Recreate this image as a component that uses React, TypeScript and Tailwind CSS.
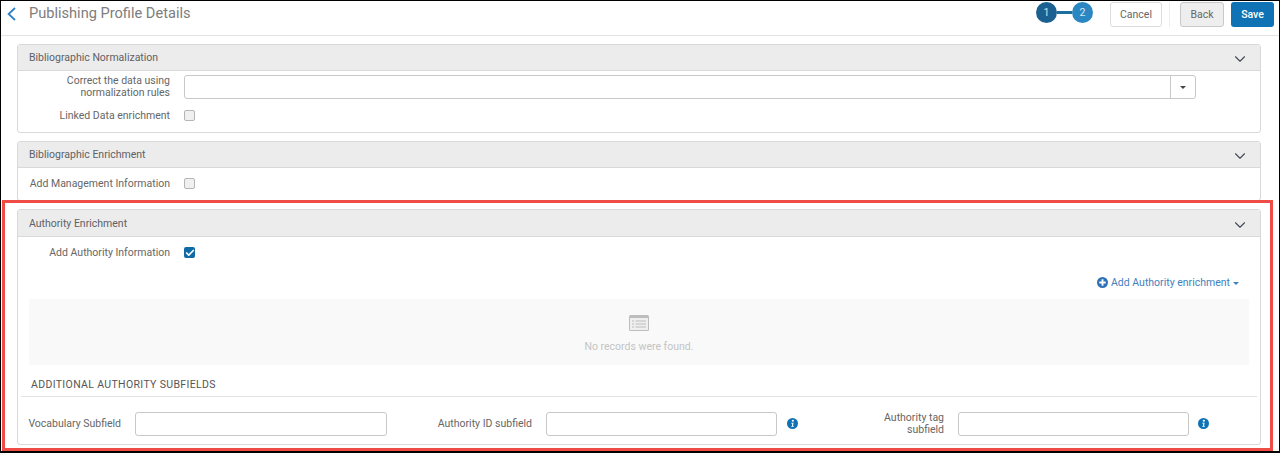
import { ChevronDown, Check } from "lucide-react";
import type { ReactNode } from "react";

function Panel({ title, className, headerClass = "h-[26px]", children }: { title: string; className: string; headerClass?: string; children: ReactNode }) {
  return (
    <section className={`rounded-[3px] border border-[#d9d9d9] bg-white ${className}`}>
      <div className={`flex items-center justify-between border-b border-[#d9d9d9] bg-[#ececec] px-[11px] ${headerClass}`}>
        <h2 className="text-[10.5px] leading-[16px] text-[#5f5f66]">{title}</h2>
        <ChevronDown className="mt-[2px] h-[18px] w-[18px] text-[#444b55]" strokeWidth={1.5} />
      </div>
      {children}
    </section>
  );
}

function FieldLabel({ children, className }: { children: ReactNode; className: string }) {
  return <label className={`text-right text-[10.5px] leading-[12px] text-[#666] ${className}`}>{children}</label>;
}

function Checkbox({ checked = false }: { checked?: boolean }) {
  return checked ? (
    <span className="mb-px ml-[14px] flex h-[11px] w-[11px] items-center justify-center rounded-[2px] bg-[#0f6aa5]">
      <Check className="h-[10px] w-[10px] text-white" strokeWidth={4} />
    </span>
  ) : (
    <span className="mb-px ml-[14px] h-[11px] w-[11px] rounded-[2px] border border-[#b5b5b5] bg-[#f0f0f0]" />
  );
}

function InfoIcon() {
  return (
    <svg viewBox="0 0 12 12" className="h-[11px] w-[11px]">
      <circle cx="6" cy="6" r="6" fill="#0f72b5" />
      <circle cx="6.4" cy="3" r="1.2" fill="#fff" />
      <path d="M4.6 5.1h2.6L6.6 8.6h.8v.9H4.7v-.9h.7l.4-2.6H4.6z" fill="#fff" />
    </svg>
  );
}

function TextInput({ className }: { className: string }) {
  return <input className={`h-[24px] rounded-[3px] border border-[#c8c8c8] bg-white ${className}`} />;
}

export default function App() {
  return (
    <div className="relative h-[453px] w-[1280px] overflow-hidden border border-b-2 border-black bg-white font-['Roboto',sans-serif]">
      <header className="flex h-[35px] items-start border-b border-[#e4e4e4]">
        <svg viewBox="0 0 9 14" className="ml-[6px] mt-[6px] h-[14px] w-[9px] text-[#2f7fc1]" fill="none" stroke="currentColor" strokeWidth="1.8">
          <path d="M8 1 L1.6 7 L8 13" />
        </svg>
        <h1 className="ml-[13px] mt-[1px] text-[14.6px] leading-[22px] text-[#7d7d7d]">Publishing Profile Details</h1>
        <div className="ml-auto mt-px flex items-center">
          <span className="flex h-[21px] w-[21px] items-center justify-center rounded-full bg-[#1a6191] text-[10.5px] text-white/80">1</span>
          <span className="h-[3px] w-[15px] bg-[#1a6f9f]" />
          <span className="flex h-[21px] w-[21px] items-center justify-center rounded-full bg-[#2a87c2] text-[10.5px] text-white/80">2</span>
        </div>
        <button className="ml-[17px] mt-px h-[25px] w-[52px] rounded-[3px] border border-[#dcdcdc] bg-white text-[10.5px] text-[#666]">Cancel</button>
        <span className="ml-[7px] mt-px h-[25px] w-px bg-[#eee]" />
        <button className="ml-[10px] mt-px h-[25px] w-[44px] rounded-[3px] border border-[#c9c9c9] bg-[#eeeeee] text-[10.5px] text-[#666]">Back</button>
        <button className="ml-[7px] mr-[5px] mt-px h-[25px] w-[43px] rounded-[3px] bg-[#0f72b5] text-[10.5px] font-medium text-white">Save</button>
      </header>

      <div className="pl-4 pr-[18px] pt-2">
        <Panel title="Bibliographic Normalization" className="h-[89px]">
          <div className="mt-[4px] flex items-center">
            <FieldLabel className="w-[152px]">Correct the data using<br />normalization rules</FieldLabel>
            <div className="ml-[14px] flex h-[24px] w-[1012px] rounded-[3px] border border-[#c8c8c8]">
              <span className="ml-auto flex w-[25px] items-center justify-center border-l border-[#c8c8c8]">
                <span className="border-x-[3px] border-t-[3px] border-x-transparent border-t-[#444]" />
              </span>
            </div>
          </div>
          <div className="mt-[11px] flex items-center">
            <FieldLabel className="w-[152px]">Linked Data enrichment</FieldLabel>
            <Checkbox />
          </div>
        </Panel>

        <Panel title="Bibliographic Enrichment" className="mt-2 h-[60px]">
          <div className="mt-[10px] flex items-center">
            <FieldLabel className="w-[152px]">Add Management Information</FieldLabel>
            <Checkbox />
          </div>
        </Panel>

        <Panel title="Authority Enrichment" className="mt-2 h-[236px]" headerClass="h-[27px] pt-px">
          <div className="mt-[10px] flex items-center">
            <FieldLabel className="w-[152px]">Add Authority Information</FieldLabel>
            <Checkbox checked />
          </div>
          <div className="mt-[18px] flex items-center justify-end pr-[21px] text-[10.5px] leading-[12px] text-[#3f7fbd]">
            <svg viewBox="0 0 12 12" className="mb-px mr-[3px] h-[11px] w-[11px]">
              <circle cx="6" cy="6" r="6" fill="#2f71b5" />
              <path d="M5 2.5h2V5h2.5v2H7v2.5H5V7H2.5V5H5z" fill="#fff" />
            </svg>
            Add Authority enrichment
            <span className="ml-[3px] border-x-[3px] border-t-[3px] border-x-transparent border-t-[#3f7fbd]" />
          </div>
          <div className="mx-[11px] mt-[10px] flex h-[66px] flex-col items-center bg-[#f9f9f9] pt-[16px]">
            <svg viewBox="0 0 20 16" className="h-[16px] w-[20px]">
              <rect width="20" height="16" rx="1.5" fill="#bdbdbd" />
              <rect x="1" y="3" width="18" height="12" fill="#efefef" />
              <path d="M3 6h2M3 9h2M3 12h2M6.5 6H17M6.5 9H17M6.5 12H17" stroke="#bdbdbd" strokeWidth="1" />
            </svg>
            <p className="mt-[10px] text-[10.5px] leading-[12px] text-[#c4c4c4]">No records were found.</p>
          </div>
          <h3 className="ml-[13px] mt-[14px] text-[10.5px] leading-[12px] tracking-[0.35px] text-[#555]">ADDITIONAL AUTHORITY SUBFIELDS</h3>
          <div className="mx-[3px] mt-[5px] border-t border-[#e4e4e4]" />
          <div className="mt-[15px] flex items-center">
            <FieldLabel className="w-[103px]">Vocabulary Subfield</FieldLabel>
            <TextInput className="ml-[14px] w-[252px]" />
            <FieldLabel className="w-[145px]">Authority ID subfield</FieldLabel>
            <TextInput className="ml-[14px] w-[231px]" />
            <span className="mb-[2px] ml-[10px] flex"><InfoIcon /></span>
            <FieldLabel className="w-[146px]">Authority tag<br />subfield</FieldLabel>
            <TextInput className="ml-[14px] w-[231px]" />
            <span className="mb-[2px] ml-[9px] flex"><InfoIcon /></span>
          </div>
        </Panel>
      </div>

      {/* annotation rectangle drawn over the screenshot */}
      <div className="absolute left-[1px] top-[199px] h-[251px] w-[1271px] border-[3px] border-[#ee4c45]" />
    </div>
  );
}
